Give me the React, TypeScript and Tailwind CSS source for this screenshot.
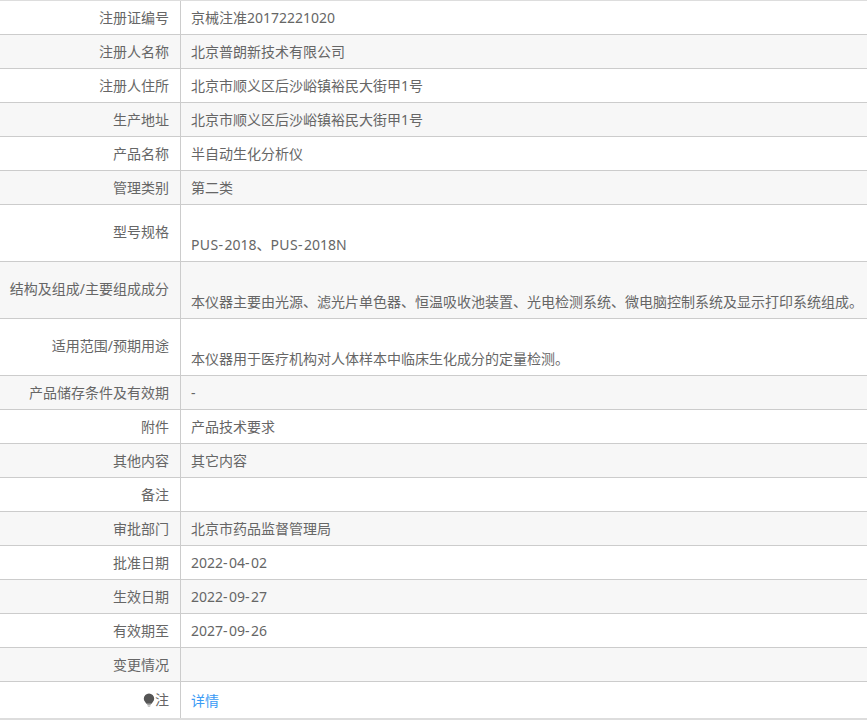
import type { ReactNode } from 'react';

function Dash() {
  return <span className="tracking-[1.5px]">-</span>;
}

function DateText({ value }: { value: string }) {
  const [year, month, day] = value.split('-');
  return (
    <span>
      {year}
      <Dash />
      {month}
      <Dash />
      {day}
    </span>
  );
}

const rows: { label: string; value: ReactNode; tall?: boolean; link?: boolean; note?: boolean }[] = [
  { label: '注册证编号', value: '京械注准20172221020' },
  { label: '注册人名称', value: '北京普朗新技术有限公司' },
  { label: '注册人住所', value: '北京市顺义区后沙峪镇裕民大街甲1号' },
  { label: '生产地址', value: '北京市顺义区后沙峪镇裕民大街甲1号' },
  { label: '产品名称', value: '半自动生化分析仪' },
  { label: '管理类别', value: '第二类' },
  {
    label: '型号规格',
    value: (
      <span>
        <span className="tracking-[0.35px]">PUS</span>
        <Dash />
        2018、<span className="tracking-[0.35px]">PUS</span>
        <Dash />
        2018N
      </span>
    ),
    tall: true,
  },
  {
    label: '结构及组成/主要组成成分',
    value: '本仪器主要由光源、滤光片单色器、恒温吸收池装置、光电检测系统、微电脑控制系统及显示打印系统组成。',
    tall: true,
  },
  { label: '适用范围/预期用途', value: '本仪器用于医疗机构对人体样本中临床生化成分的定量检测。', tall: true },
  { label: '产品储存条件及有效期', value: '-' },
  { label: '附件', value: '产品技术要求' },
  { label: '其他内容', value: '其它内容' },
  { label: '备注', value: '' },
  { label: '审批部门', value: '北京市药品监督管理局' },
  { label: '批准日期', value: <DateText value="2022-04-02" /> },
  { label: '生效日期', value: <DateText value="2022-09-27" /> },
  { label: '有效期至', value: <DateText value="2027-09-26" /> },
  { label: '变更情况', value: '' },
  { label: '注', value: '详情', link: true, note: true },
];

function BulbIcon() {
  return (
    <svg viewBox="0 0 12 14" className="inline-block h-[14px] w-[12px]">
      <path d="M6 .6a5.2 5.2 0 0 0-5.2 5.2c0 2.1 1.5 3.2 2.6 5h5.2c1.1-1.8 2.6-2.9 2.6-5A5.2 5.2 0 0 0 6 .6z" fill="#555" />
      <rect x="4.2" y="11.2" width="3.6" height="1" fill="#888" />
      <rect x="4.8" y="12.6" width="2.4" height="1" fill="#aaa" />
    </svg>
  );
}

export default function App() {
  return (
    <div className="h-[726px] w-[867px] overflow-hidden bg-white font-['Noto_Sans','Noto_Sans_CJK_SC',sans-serif] text-sm text-[#666]">
      <div className="border-y border-y-[#ddd] border-b-2">
        {rows.map((row, index) => (
          <div
            key={row.label}
            className={`grid grid-cols-[181px_1fr] ${index < rows.length - 1 ? 'border-b border-[#ccc]' : ''} ${
              index % 2 === 1 ? 'bg-[#f7f7f7]' : ''
            } ${row.tall ? 'h-[57px]' : index === rows.length - 1 ? 'h-[36px]' : 'h-[34px]'}`}
          >
            <div className={`flex items-center justify-end border-r border-[#ccc] pr-[11px] ${row.tall ? 'pb-[2px]' : ''}`}>
              {row.note && <BulbIcon />}
              {row.label}
            </div>
            <div
              className={`flex whitespace-nowrap pl-[10px] ${row.tall ? 'items-end pb-[6px]' : 'items-center'} ${
                row.link ? 'pt-[2px] text-[#3a9bf5]' : ''
              }`}
            >
              {row.value}
            </div>
          </div>
        ))}
      </div>
    </div>
  );
}
